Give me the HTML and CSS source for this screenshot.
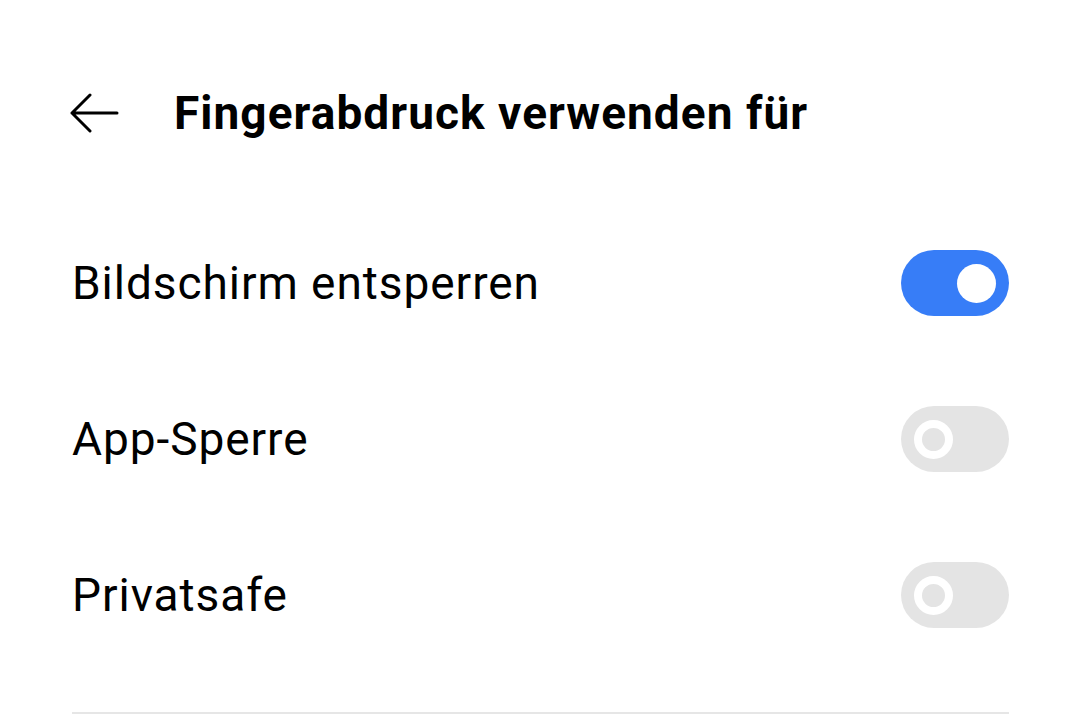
FILE: index.html
```html
<!DOCTYPE html>
<html lang="de">
<head>
    <meta charset="UTF-8">
    <meta name="viewport" content="width=device-width, initial-scale=1.0">
    <title>Fingerabdruck verwenden für</title>
    <link rel="stylesheet" href="styles.css">
</head>
<body>
    <div class="page">
        <!-- Header with back arrow -->
        <div class="header">
            <span class="back-button">
                <svg width="50" height="40" viewBox="0 0 50 40">
                    <path d="M48 20 H3 M21 2 L3 20 L21 38" fill="none" stroke="#000" stroke-width="3" stroke-linecap="round" stroke-linejoin="round"/>
                </svg>
            </span>
            <h1>Fingerabdruck verwenden für</h1>
        </div>

        <!-- Settings list -->
        <div class="settings-list">
            <div class="setting-row">
                <span class="setting-label">Bildschirm entsperren</span>
                <span class="switch on"><span class="knob"></span></span>
            </div>
            <div class="setting-row">
                <span class="setting-label">App-Sperre</span>
                <span class="switch"><span class="knob"></span></span>
            </div>
            <div class="setting-row">
                <span class="setting-label">Privatsafe</span>
                <span class="switch"><span class="knob"></span></span>
            </div>
        </div>
        <div class="divider"></div>
    </div>
</body>
</html>
```

FILE: styles.css
```css
body {
    background-color: #fff; /* Plain white background */
    font-family: Roboto, "Noto Sans", Arial, sans-serif;
    color: #000;
    margin: 0;
    padding: 0;
}

.page {
    padding: 78px 71px 0 72px;
}

.header {
    display: flex;
    align-items: center;
    height: 70px;
}

.back-button {
    display: flex;
    width: 105px;
    margin-left: -3px;
}

h1 {
    margin: 0;
    font-size: 46px;
    font-weight: 700;
    letter-spacing: 1.05px;
}

.settings-list {
    margin-top: 57px;
}

/* One row: label left, switch right */
.setting-row {
    display: flex;
    align-items: center;
    justify-content: space-between;
    height: 156px;
}

.setting-label {
    font-size: 46px;
    font-weight: 400;
    letter-spacing: 0.95px;
}

.switch {
    display: flex;
    align-items: center;
    width: 108px;
    height: 66px;
    border-radius: 33px;
    background-color: #e4e4e4;
    box-sizing: border-box;
    padding: 0 13px;
}

.switch .knob {
    width: 23px;
    height: 23px;
    border-radius: 50%;
    border: 8px solid #fff;
    background-color: #e4e4e4;
}

.switch.on {
    background-color: #377df7;
    justify-content: flex-end;
}

.switch.on .knob {
    width: 39px;
    height: 39px;
    border: none;
    background-color: #fff;
}

.divider {
    height: 2px;
    background-color: #e6e6e6;
    margin-top: 39px;
}
```
